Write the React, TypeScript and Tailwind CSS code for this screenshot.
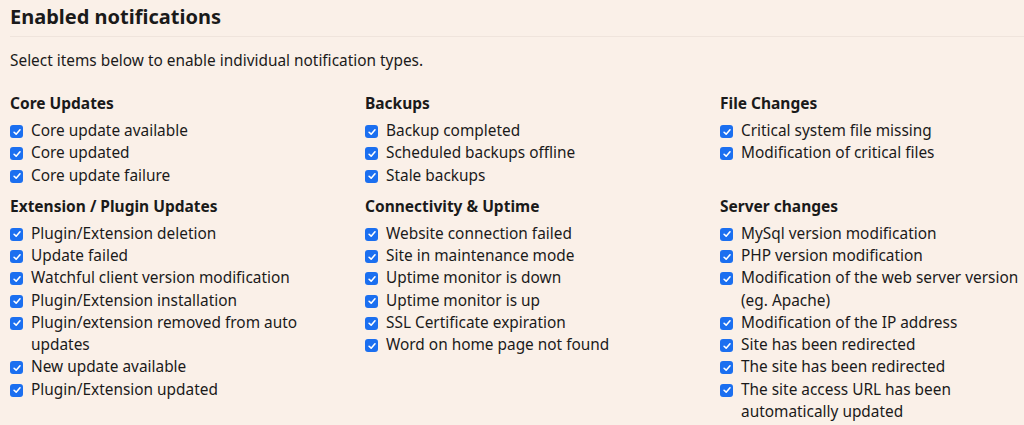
const sections: { title: string; items: string[] }[][] = [
  [
    { title: 'Core Updates', items: ['Core update available', 'Core updated', 'Core update failure'] },
    { title: 'Backups', items: ['Backup completed', 'Scheduled backups offline', 'Stale backups'] },
    { title: 'File Changes', items: ['Critical system file missing', 'Modification of critical files'] },
  ],
  [
    {
      title: 'Extension / Plugin Updates',
      items: [
        'Plugin/Extension deletion',
        'Update failed',
        'Watchful client version modification',
        'Plugin/Extension installation',
        'Plugin/extension removed from auto updates',
        'New update available',
        'Plugin/Extension updated',
      ],
    },
    {
      title: 'Connectivity & Uptime',
      items: [
        'Website connection failed',
        'Site in maintenance mode',
        'Uptime monitor is down',
        'Uptime monitor is up',
        'SSL Certificate expiration',
        'Word on home page not found',
      ],
    },
    {
      title: 'Server changes',
      items: [
        'MySql version modification',
        'PHP version modification',
        'Modification of the web server version (eg. Apache)',
        'Modification of the IP address',
        'Site has been redirected',
        'The site has been redirected',
        'The site access URL has been automatically updated',
      ],
    },
  ],
]

function Check() {
  return (
    <span className="mt-[5px] flex h-[13px] w-[13px] shrink-0 items-center justify-center rounded-[3px] bg-[#1b6ff0]">
      <svg viewBox="0 0 12 12" className="h-[10px] w-[10px]" fill="none">
        <path d="M2.5 6.3 L5 8.6 L9.6 3.4" stroke="white" strokeWidth="1.9" strokeLinecap="round" strokeLinejoin="round" />
      </svg>
    </span>
  )
}

export default function App() {
  return (
    <div className="min-h-[425px] bg-[#faf0e8] pl-[10px] text-[#1a1a1a] [font-family:'Noto_Sans',sans-serif]">
      <h2 className="border-b border-[#efe4dc] pt-[5px] pb-[7px] text-[20px] font-bold leading-[24px]">
        Enabled notifications
      </h2>
      <p className="mt-[13px] text-[15.4px] leading-[22px]">
        Select items below to enable individual notification types.
      </p>
      <div className="mt-[20px] grid grid-cols-[316px_316px_316px] gap-x-[39px] gap-y-[8px]">
        {sections.flat().map((s) => (
          <div key={s.title}>
            <h3 className="mb-[6px] text-[15.5px] font-bold leading-[22px]">{s.title}</h3>
            <ul>
              {s.items.map((item) => (
                <li key={item} className="flex gap-[8px] text-[15.4px] leading-[22.25px]">
                  <Check />
                  <span>{item}</span>
                </li>
              ))}
            </ul>
          </div>
        ))}
      </div>
    </div>
  )
}
